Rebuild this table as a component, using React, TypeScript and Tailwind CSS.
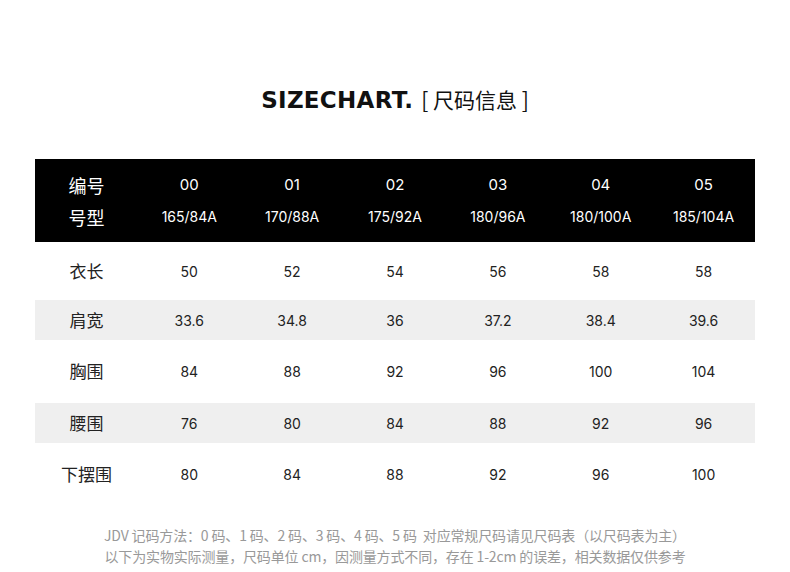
import React from "react";

const cols = [
  ["00", "165/84A"],
  ["01", "170/88A"],
  ["02", "175/92A"],
  ["03", "180/96A"],
  ["04", "180/100A"],
  ["05", "185/104A"],
];

const rows: { label: string; vals: string[]; shade: boolean; mt: string }[] = [
  { label: "衣长", vals: ["50", "52", "54", "56", "58", "58"], shade: false, mt: "mt-[9px]" },
  { label: "肩宽", vals: ["33.6", "34.8", "36", "37.2", "38.4", "39.6"], shade: true, mt: "mt-[9px]" },
  { label: "胸围", vals: ["84", "88", "92", "96", "100", "104"], shade: false, mt: "mt-[11px]" },
  { label: "腰围", vals: ["76", "80", "84", "88", "92", "96"], shade: true, mt: "mt-[12px]" },
  { label: "下摆围", vals: ["80", "84", "88", "92", "96", "100"], shade: false, mt: "mt-[11px]" },
];

export default function App() {
  return (
    <div className="w-[790px] h-[572px] bg-white overflow-hidden flex flex-col font-['Noto_Sans_CJK_SC',sans-serif]">
      <div className="h-[159px] flex items-center justify-center pt-[41px]">
        <span className="text-[23px] font-bold text-[#111] tracking-[0.3px] font-['DejaVu_Sans',sans-serif]">
          SIZECHART.
        </span>
        <span className="text-[21px] text-[#111] ml-[8px] font-['Noto_Sans_CJK_SC',sans-serif]">[ 尺码信息 ]</span>
      </div>
      <div className="mx-[35px]">
        <div className="bg-black h-[83px] grid grid-cols-7 text-white">
          <div className="flex flex-col items-center justify-center gap-[6px] text-[18px] leading-[26px]">
            <span>编号</span>
            <span>号型</span>
          </div>
          {cols.map(([a, b]) => (
            <div
              key={a}
              className="flex flex-col items-center justify-center gap-[6px] text-[14px] leading-[26px] font-['Inter','Noto_Sans_CJK_SC',sans-serif]"
            >
              <span className="text-[15px]">{a}</span>
              <span>{b}</span>
            </div>
          ))}
        </div>
        {rows.map((r) => (
          <div
            key={r.label}
            className={`${r.mt} h-[40px] grid grid-cols-7 items-center text-[#222] ${r.shade ? "bg-[#efefef]" : "bg-white"}`}
          >
            <div className="text-center text-[17px]">{r.label}</div>
            {r.vals.map((v, i) => (
              <div key={i} className="text-center text-[14px] font-['Inter','Noto_Sans_CJK_SC',sans-serif]">
                {v}
              </div>
            ))}
          </div>
        ))}
      </div>
      <div className="mt-[31px] flex flex-col items-center text-[14px] leading-[21px] text-[#999] tracking-[-0.15px]">
        <div>JDV 记码方法：0 码、1 码、2 码、3 码、4 码、5 码&nbsp;&nbsp;对应常规尺码请见尺码表（以尺码表为主）</div>
        <div>以下为实物实际测量，尺码单位 cm，因测量方式不同，存在 1-2cm 的误差，相关数据仅供参考</div>
      </div>
    </div>
  );
}
